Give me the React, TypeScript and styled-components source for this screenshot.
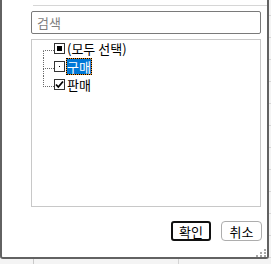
import React from "react";
import styled, { createGlobalStyle } from "styled-components";

const Global = createGlobalStyle`
  html, body {
    margin: 0;
    padding: 0;
  }
  body {
    font-family: "Noto Sans CJK KR", "Noto Sans", sans-serif;
    font-size: 13px;
    color: #000;
  }
`;

// excel grid peeking out behind the dropdown
const Sheet = styled.div`
  width: 271px;
  height: 264px;
  background-color: #f4f4f4;
  background-image:
    linear-gradient(to right, transparent 33px, #c9c9c9 33px, #c9c9c9 34px, transparent 34px),
    linear-gradient(to right, transparent 178px, #d4d4d4 178px, #d4d4d4 179px, transparent 179px),
    repeating-linear-gradient(to bottom, transparent 0, transparent 15px, #d6d6d6 15px, #d6d6d6 16px, transparent 16px, transparent 22px);
  overflow: hidden;
`;

const Panel = styled.div`
  box-sizing: border-box;
  width: 269px;
  height: 259px;
  background: #fff;
  border-left: 2px solid #626262;
  border-right: 2px solid #626262;
  border-bottom: 2px solid #626262;
  border-radius: 0 0 3px 3px;
  padding: 0 6px 0 29px;
  display: flex;
  flex-direction: column;
`;

const Separator = styled.div`
  height: 1px;
  background: #d6d6d6;
  margin: 5px -6px 0 2px;
`;

const Search = styled.input`
  box-sizing: border-box;
  margin-top: 5px;
  width: 230px;
  height: 23px;
  border: 1px solid #7a7a7a;
  border-radius: 2px;
  padding: 0 5px;
  font-family: inherit;
  font-size: 13px;
  outline: none;

  &::placeholder {
    color: #7f7f7f;
  }
`;

const ListBox = styled.div`
  box-sizing: border-box;
  margin-top: 5px;
  width: 230px;
  height: 169px;
  border: 1px solid #c8c8c8;
  padding-left: 11px;
  display: flex;
  flex-direction: column;
`;

const Row = styled.div`
  height: 18px;
  display: flex;
  align-items: stretch;
`;

const Connector = styled.div`
  width: 11px;
  display: flex;
  flex-direction: column;
`;

const ConnTop = styled.div<{ $line: boolean }>`
  box-sizing: border-box;
  height: 11px;
  border-bottom: 1px dotted #6a6a6a;
  border-left: ${(p) => (p.$line ? "1px dotted #6a6a6a" : "1px solid transparent")};
`;

const ConnBottom = styled.div<{ $line: boolean }>`
  flex: 1;
  border-left: ${(p) => (p.$line ? "1px dotted #6a6a6a" : "1px solid transparent")};
`;

const Box = styled.div`
  box-sizing: border-box;
  align-self: center;
  width: 11px;
  height: 11px;
  border: 1px solid #333;
  background: #fff;
  display: flex;
  align-items: center;
  justify-content: center;
`;

const Fill = styled.div`
  width: 5px;
  height: 5px;
  background: #000;
`;

const Dot = styled.div`
  width: 1px;
  height: 1px;
  background: #000;
`;

const Label = styled.span<{ $selected?: boolean }>`
  align-self: center;
  margin-left: ${(p) => (p.$selected ? "1px" : "2px")};
  line-height: 17px;
  white-space: nowrap;
  ${(p) =>
    p.$selected &&
    `
    box-sizing: border-box;
    height: 17px;
    padding: 0 1px;
    color: #fff;
    background: #0078d7;
    outline: 1px dotted #000;
    outline-offset: -1px;
    box-shadow: inset 0 0 0 1px #f0901e;
  `}
`;

const Buttons = styled.div`
  margin-top: 14px;
  width: 231px;
  display: flex;
  justify-content: flex-end;
  gap: 10px;
`;

const Button = styled.button<{ $primary?: boolean }>`
  box-sizing: border-box;
  height: 20px;
  width: ${(p) => (p.$primary ? "40px" : "41px")};
  padding: 0;
  background: #fff;
  font-family: inherit;
  font-size: 13px;
  line-height: 1;
  color: #000;
  border: ${(p) => (p.$primary ? "2px solid #111" : "1px solid #adadad")};
  border-radius: ${(p) => (p.$primary ? "3px" : "4px")};
`;

const Grip = styled.div`
  margin: 8px -5px 0 0;
  display: flex;
  justify-content: flex-end;
  line-height: 0;
`;

const Check = () => (
  <svg width="9" height="9" viewBox="0 0 9 9">
    <path d="M1 4.5 L3.3 7 L8 1.5" stroke="#000" strokeWidth="1.8" fill="none" />
  </svg>
);

type Item = { label: string; state: "mixed" | "off" | "on"; selected?: boolean };

const items: Item[] = [
  { label: "(모두 선택)", state: "mixed" },
  { label: "구매", state: "off", selected: true },
  { label: "판매", state: "on" },
];

export default function App() {
  return (
    <Sheet>
      <Global />
      <Panel>
        <Separator />
        <Search placeholder="검색" />
        <ListBox>
          {items.map((it, i) => (
            <Row key={it.label}>
              <Connector>
                <ConnTop $line={i > 0} />
                <ConnBottom $line={i < items.length - 1} />
              </Connector>
              <Box>
                {it.state === "mixed" && <Fill />}
                {it.state === "off" && <Dot />}
                {it.state === "on" && <Check />}
              </Box>
              <Label $selected={it.selected}>{it.label}</Label>
            </Row>
          ))}
        </ListBox>
        <Buttons>
          <Button $primary>확인</Button>
          <Button>취소</Button>
        </Buttons>
        <Grip>
          <svg width="10" height="8" viewBox="0 0 10 8">
            <rect x="8" y="0" width="2" height="2" fill="#a8a8a8" />
            <rect x="4" y="3" width="2" height="2" fill="#a8a8a8" />
            <rect x="8" y="3" width="2" height="2" fill="#a8a8a8" />
            <rect x="0" y="6" width="2" height="2" fill="#a8a8a8" />
            <rect x="4" y="6" width="2" height="2" fill="#a8a8a8" />
            <rect x="8" y="6" width="2" height="2" fill="#a8a8a8" />
          </svg>
        </Grip>
      </Panel>
    </Sheet>
  );
}
